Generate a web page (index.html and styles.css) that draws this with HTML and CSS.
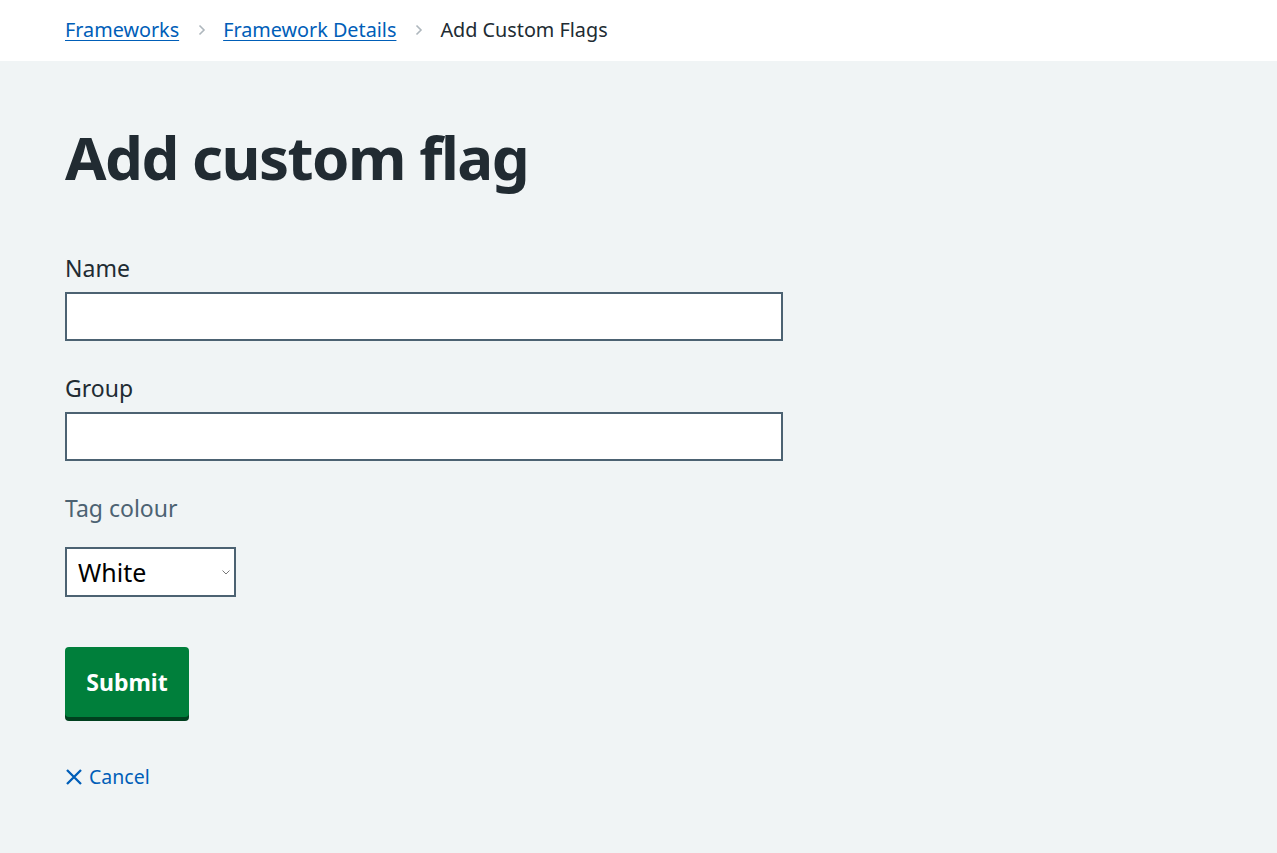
FILE: index.html
```html
<!DOCTYPE html>
<html lang="en">
<head>
<meta charset="utf-8">
<title>Add custom flag</title>
<link rel="stylesheet" href="styles.css">
</head>
<body>
<header class="crumbs">
  <nav class="crumbs__inner">
    <a class="crumbs__link" href="#">Frameworks</a>
    <span class="crumbs__sep"><svg width="10" height="14" viewBox="0 0 10 14"><path d="M2.5 2.5 L7 7 L2.5 11.5" fill="none" stroke="#aeb7bd" stroke-width="1.6"/></svg></span>
    <a class="crumbs__link" href="#">Framework Details</a>
    <span class="crumbs__sep"><svg width="10" height="14" viewBox="0 0 10 14"><path d="M2.5 2.5 L7 7 L2.5 11.5" fill="none" stroke="#aeb7bd" stroke-width="1.6"/></svg></span>
    <span class="crumbs__current">Add Custom Flags</span>
  </nav>
</header>
<main class="page">
  <h1 class="title">Add custom flag</h1>
  <form class="form">
    <div class="field">
      <label class="label" for="name">Name</label>
      <input class="input" id="name" type="text">
    </div>
    <div class="field">
      <label class="label" for="group">Group</label>
      <input class="input" id="group" type="text">
    </div>
    <div class="field field--select">
      <label class="label label--hint" for="colour">Tag colour</label>
      <select class="select" id="colour">
        <option>White</option>
      </select>
    </div>
    <button class="button" type="button">Submit</button>
    <a class="cancel" href="#"><svg class="cancel__icon" width="18" height="18" viewBox="0 0 18 18"><path d="M2 2 L16 16 M16 2 L2 16" stroke="#005eb8" stroke-width="2.3" fill="none"/></svg><span>Cancel</span></a>
  </form>
</main>
</body>
</html>
```

FILE: styles.css
```css
* { box-sizing: border-box; }
html, body { margin: 0; padding: 0; }
body {
  font-family: "Noto Sans", "Open Sans", Arial, sans-serif;
  color: #212b32;
  background: #f0f4f5;
  min-height: 853px;
}
.crumbs {
  background: #ffffff;
  height: 61px;
}
.crumbs__inner {
  display: flex;
  align-items: center;
  height: 61px;
  padding-left: 65px;
  font-size: 19.8px;
  padding-bottom: 2px;
}
.crumbs__link {
  color: #005eb8;
  text-decoration: underline;
  text-underline-offset: 3px;
  text-decoration-thickness: 1px;
}
.crumbs__sep {
  display: inline-flex;
  margin: 0 16px 0 18px;
}
.crumbs__current { color: #212b32; }
.page {
  padding: 60px 65px 60px;
}
.title {
  margin: 0 0 60px;
  font-size: 60px;
  line-height: 1.2;
  font-weight: 700;
  letter-spacing: -1.5px;
}
.form { display: flex; flex-direction: column; align-items: flex-start; }
.field { display: flex; flex-direction: column; margin-bottom: 32px; }
.field--select { margin-bottom: 50px; }
.label {
  font-size: 23px;
  line-height: 30px;
  margin-bottom: 9px;
}
.label--hint { color: #4c6272; margin-bottom: 24px; }
.input {
  width: 718px;
  height: 49px;
  border: 2px solid #4c6272;
  background: #fff;
  border-radius: 0;
  font: inherit;
  font-size: 23px;
  padding: 4px 8px;
}
.select {
  appearance: none;
  -webkit-appearance: none;
  width: 171px;
  height: 50px;
  border: 2px solid #4c6272;
  border-radius: 0;
  background: #fff url("data:image/svg+xml,%3Csvg xmlns='http://www.w3.org/2000/svg' width='8' height='5' viewBox='0 0 8 5'%3E%3Cpath d='M0.5 0.5 L4 4 L7.5 0.5' fill='none' stroke='%23777' stroke-width='1'/%3E%3C/svg%3E") no-repeat right 4px center;
  font-family: inherit;
  font-size: 25px;
  color: #000;
  padding: 0 11px;
}
.button {
  background: #007f3b;
  color: #fff;
  border: 0;
  border-radius: 4px;
  box-shadow: 0 4px 0 #00401e;
  font-family: inherit;
  font-weight: 700;
  font-size: 23px;
  height: 70px;
  width: 124px;
  padding: 0;
  margin-bottom: 46px;
  cursor: pointer;
}
.cancel {
  display: inline-flex;
  align-items: center;
  gap: 6px;
  color: #005eb8;
  text-decoration: none;
  font-size: 19.5px;
}
.cancel__icon { display: block; }
```
